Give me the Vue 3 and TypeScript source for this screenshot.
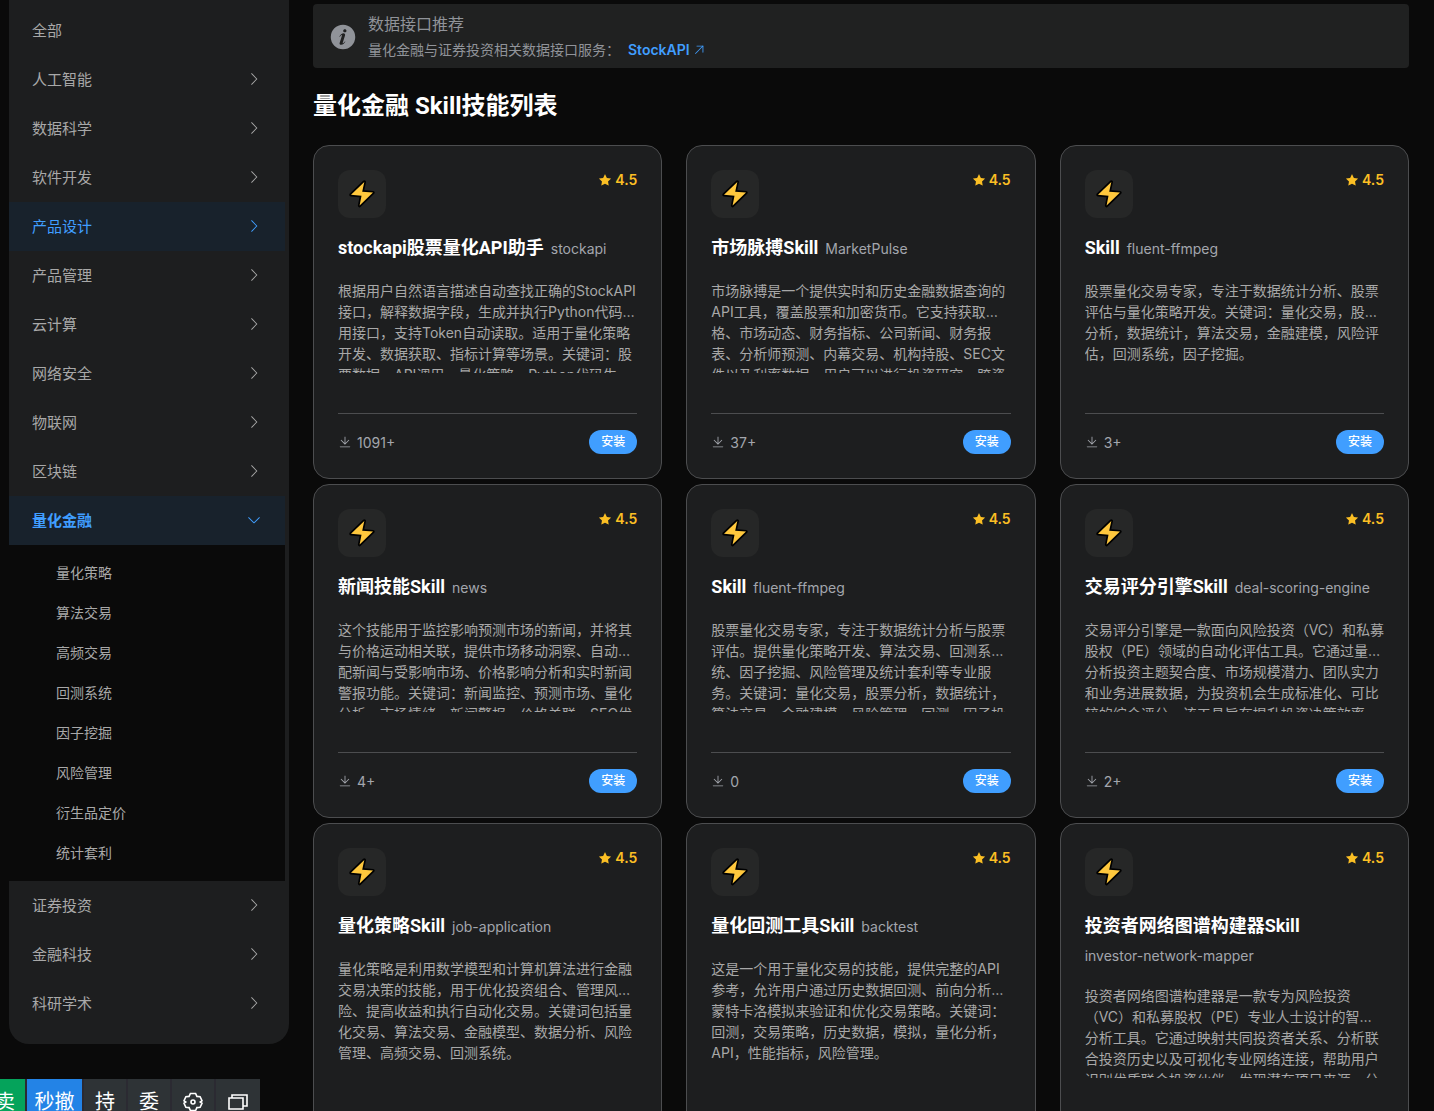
<script setup lang="ts">
interface Category {
  name: string
  state?: 'hover' | 'open'
  leaf?: boolean
  children?: string[]
}

interface Skill {
  title: string
  slug: string
  lines: string[]
  installs: string
}

const categories: Category[] = [
  { name: '全部', leaf: true },
  { name: '人工智能' },
  { name: '数据科学' },
  { name: '软件开发' },
  { name: '产品设计', state: 'hover' },
  { name: '产品管理' },
  { name: '云计算' },
  { name: '网络安全' },
  { name: '物联网' },
  { name: '区块链' },
  {
    name: '量化金融',
    state: 'open',
    children: ['量化策略', '算法交易', '高频交易', '回测系统', '因子挖掘', '风险管理', '衍生品定价', '统计套利'],
  },
  { name: '证券投资' },
  { name: '金融科技' },
  { name: '科研学术' },
]

const skills: Skill[] = [
  {
    title: 'stockapi股票量化API助手',
    slug: 'stockapi',
    lines: [
      '根据用户自然语言描述自动查找正确的StockAPI',
      '接口，解释数据字段，生成并执行Python代码…',
      '用接口，支持Token自动读取。适用于量化策略',
      '开发、数据获取、指标计算等场景。关键词：股',
      '票数据、API调用、量化策略、Python代码生',
    ],
    installs: '1091+',
  },
  {
    title: '市场脉搏Skill',
    slug: 'MarketPulse',
    lines: [
      '市场脉搏是一个提供实时和历史金融数据查询的',
      'API工具，覆盖股票和加密货币。它支持获取…',
      '格、市场动态、财务指标、公司新闻、财务报',
      '表、分析师预测、内幕交易、机构持股、SEC文',
      '件以及利率数据。用户可以进行投资研究、跨资',
    ],
    installs: '37+',
  },
  {
    title: 'Skill',
    slug: 'fluent-ffmpeg',
    lines: [
      '股票量化交易专家，专注于数据统计分析、股票',
      '评估与量化策略开发。关键词：量化交易，股…',
      '分析，数据统计，算法交易，金融建模，风险评',
      '估，回测系统，因子挖掘。',
    ],
    installs: '3+',
  },
  {
    title: '新闻技能Skill',
    slug: 'news',
    lines: [
      '这个技能用于监控影响预测市场的新闻，并将其',
      '与价格运动相关联，提供市场移动洞察、自动…',
      '配新闻与受影响市场、价格影响分析和实时新闻',
      '警报功能。关键词：新闻监控、预测市场、量化',
      '分析、市场情绪、新闻警报、价格关联、SEO优',
    ],
    installs: '4+',
  },
  {
    title: 'Skill',
    slug: 'fluent-ffmpeg',
    lines: [
      '股票量化交易专家，专注于数据统计分析与股票',
      '评估。提供量化策略开发、算法交易、回测系…',
      '统、因子挖掘、风险管理及统计套利等专业服',
      '务。关键词：量化交易，股票分析，数据统计，',
      '算法交易，金融建模，风险管理，回测，因子投',
    ],
    installs: '0',
  },
  {
    title: '交易评分引擎Skill',
    slug: 'deal-scoring-engine',
    lines: [
      '交易评分引擎是一款面向风险投资（VC）和私募',
      '股权（PE）领域的自动化评估工具。它通过量…',
      '分析投资主题契合度、市场规模潜力、团队实力',
      '和业务进展数据，为投资机会生成标准化、可比',
      '较的综合评分。该工具旨在提升投资决策效率',
    ],
    installs: '2+',
  },
  {
    title: '量化策略Skill',
    slug: 'job-application',
    lines: [
      '量化策略是利用数学模型和计算机算法进行金融',
      '交易决策的技能，用于优化投资组合、管理风…',
      '险、提高收益和执行自动化交易。关键词包括量',
      '化交易、算法交易、金融模型、数据分析、风险',
      '管理、高频交易、回测系统。',
    ],
    installs: '1+',
  },
  {
    title: '量化回测工具Skill',
    slug: 'backtest',
    lines: [
      '这是一个用于量化交易的技能，提供完整的API',
      '参考，允许用户通过历史数据回测、前向分析…',
      '蒙特卡洛模拟来验证和优化交易策略。关键词：',
      '回测，交易策略，历史数据，模拟，量化分析，',
      'API，性能指标，风险管理。',
    ],
    installs: '1+',
  },
  {
    title: '投资者网络图谱构建器Skill',
    slug: 'investor-network-mapper',
    lines: [
      '投资者网络图谱构建器是一款专为风险投资',
      '（VC）和私募股权（PE）专业人士设计的智…',
      '分析工具。它通过映射共同投资者关系、分析联',
      '合投资历史以及可视化专业网络连接，帮助用户',
      '识别优质联合投资伙伴、发现潜在项目来源、分',
    ],
    installs: '1+',
  },
]
</script>

<template>
  <div class="page" lang="zh-CN">
    <nav class="sidebar" aria-label="技能分类">
      <ul class="menu">
        <li v-for="c in categories" :key="c.name">
          <a href="#" class="menu-item" :class="c.state">
            <span>{{ c.name }}</span>
            <svg v-if="c.state === 'open'" class="chevron" viewBox="0 0 1024 1024" aria-hidden="true">
              <path d="M831.872 340.864 512 652.672 192.128 340.864a30.592 30.592 0 0 0-42.752 0 29.12 29.12 0 0 0 0 41.6L489.664 714.24a32 32 0 0 0 44.672 0l340.288-331.712a29.12 29.12 0 0 0 0-41.728 30.592 30.592 0 0 0-42.752 0z" />
            </svg>
            <svg v-else-if="!c.leaf" class="chevron" viewBox="0 0 1024 1024" aria-hidden="true">
              <path d="M340.864 149.312a30.592 30.592 0 0 0 0 42.752L652.736 512 340.864 831.872a30.592 30.592 0 0 0 0 42.752 29.12 29.12 0 0 0 41.728 0L714.24 534.336a32 32 0 0 0 0-44.672L382.592 149.376a29.12 29.12 0 0 0-41.728 0z" />
            </svg>
          </a>
          <ul v-if="c.children" class="submenu">
            <li v-for="s in c.children" :key="s">
              <a href="#" class="submenu-item">{{ s }}</a>
            </li>
          </ul>
        </li>
      </ul>
    </nav>

    <main class="content">
      <section class="notice">
        <svg class="notice-icon" viewBox="0 0 1024 1024" aria-hidden="true">
          <path d="M512 64a448 448 0 1 1 0 896.064A448 448 0 0 1 512 64m67.2 275.072c33.28 0 60.288-23.104 60.288-57.344s-27.072-57.344-60.288-57.344c-33.28 0-60.16 23.104-60.16 57.344s26.88 57.344 60.16 57.344M590.912 699.2c0-6.848 2.368-24.64 1.024-34.752l-52.608 60.544c-10.88 11.456-24.512 19.392-30.912 17.28a12.992 12.992 0 0 1-8.256-14.72l87.68-276.992c7.168-35.136-12.544-67.2-54.336-71.296-44.096 0-108.992 44.736-148.48 101.504 0 6.784-1.28 23.68.064 33.792l52.544-60.608c10.88-11.328 23.552-19.328 29.952-17.152a12.8 12.8 0 0 1 7.808 16.128L388.48 728.576c-10.048 32.256 8.96 63.872 55.04 71.04 67.84 0 107.904-43.648 147.456-100.416z" />
        </svg>
        <div class="notice-body">
          <p class="notice-title">数据接口推荐</p>
          <p class="notice-text">
            <span>量化金融与证券投资相关数据接口服务：</span>
            <a href="#" class="notice-link">
              StockAPI
              <svg viewBox="0 0 1024 1024" aria-hidden="true">
                <path d="M768 256H353.6a32 32 0 1 1 0-64H800a32 32 0 0 1 32 32v448a32 32 0 0 1-64 0z" />
                <path d="M777.344 201.344a32 32 0 0 1 45.312 45.312l-544 544a32 32 0 0 1-45.312-45.312z" />
              </svg>
            </a>
          </p>
        </div>
      </section>

      <h1 class="heading">量化金融 Skill技能列表</h1>

      <div class="grid">
        <article v-for="(s, i) in skills" :key="i" class="card">
          <header class="card-head">
            <span class="badge">
              <svg viewBox="0 0 26 28" aria-hidden="true">
                <path class="bolt-edge" d="M15.3 2 13.2 11.7 24 12.6 10.6 25.6 12.5 15.8 2 14.8Z" />
                <path class="bolt-fill" d="M15.3 2 13.2 11.7 24 12.6 10.6 25.6 12.5 15.8 2 14.8Z" />
              </svg>
            </span>
            <span class="rating">
              <svg viewBox="0 0 1024 1024" aria-hidden="true">
                <path d="M283.84 867.84 512 747.776l228.16 119.936a6.4 6.4 0 0 0 9.28-6.72l-43.52-254.08 184.512-179.904a6.4 6.4 0 0 0-3.52-10.88l-255.104-37.12L517.76 147.904a6.4 6.4 0 0 0-11.52 0L392.192 379.072l-255.104 37.12a6.4 6.4 0 0 0-3.52 10.88L318.08 606.976l-43.584 254.08a6.4 6.4 0 0 0 9.28 6.72z" />
              </svg>
              4.5
            </span>
          </header>
          <div class="card-title">
            <h2>{{ s.title }}</h2>
            <span class="slug">{{ s.slug }}</span>
          </div>
          <p class="desc">
            <span v-for="line in s.lines" :key="line" class="line">{{ line }}</span>
          </p>
          <footer class="card-foot">
            <span class="installs">
              <svg viewBox="0 0 1024 1024" aria-hidden="true">
                <path d="M160 832h704a32 32 0 1 1 0 64H160a32 32 0 1 1 0-64m384-253.696 236.288-236.352 45.248 45.248L508.8 704 192 387.2l45.248-45.248L480 584.704V128h64z" />
              </svg>
              {{ s.installs }}
            </span>
            <button type="button" class="install">安装</button>
          </footer>
        </article>
      </div>
    </main>

    <div class="dock" role="toolbar" aria-label="交易工具">
      <button type="button" class="dock-btn sell">卖</button>
      <button type="button" class="dock-btn cancel">秒撤</button>
      <button type="button" class="dock-btn">持</button>
      <button type="button" class="dock-btn">委</button>
      <button type="button" class="dock-btn" aria-label="设置">
        <svg viewBox="0 0 20 20" aria-hidden="true">
          <path d="M7.4 1.500h5.200l1.300 2.900 3.200.3 1.900 4-1.700 1.300 1.700 1.300-1.900 4-3.200.3-1.300 2.900H7.400l-1.300-2.900-3.200-.3-1.900-4L2.700 10 1 8.700l1.900-4 3.200-.3Z" />
          <circle cx="10" cy="10" r="2" />
        </svg>
      </button>
      <button type="button" class="dock-btn last" aria-label="窗口">
        <svg viewBox="0 0 20 20" aria-hidden="true">
          <path d="M1 6h14v11H1ZM4 6V3h15v11h-4" />
        </svg>
      </button>
    </div>
  </div>
</template>

<style>
body {
  background: #0a0a0a;
}
</style>

<style scoped>
.page {
  display: flex;
  align-items: flex-start;
  gap: 24px;
  height: 100vh;
  padding: 0 25px 0 9px;
  box-sizing: border-box;
  overflow: hidden;
  background: #0a0a0a;
  color: #a8a8a8;
  font-family: Inter, "Noto Sans CJK SC", sans-serif;
  font-size: 14px;
}

ul,
p,
h1,
h2 {
  margin: 0;
  padding: 0;
  list-style: none;
}

a {
  color: inherit;
  text-decoration: none;
}

svg {
  display: block;
  flex: none;
  fill: currentColor;
}

button {
  border: 0;
  font-family: inherit;
  cursor: pointer;
}

/* Sidebar */
.sidebar {
  flex: 0 0 280px;
  box-sizing: border-box;
  padding: 6px 4px 16px 0;
  border-radius: 0 0 20px 20px;
  background: #1d1e1f;
}

.menu-item {
  display: flex;
  align-items: center;
  justify-content: space-between;
  height: 49px;
  padding: 0 23px 2px;
  box-sizing: border-box;
  font-size: 15px;
}

.menu-item.hover,
.menu-item.open {
  background: #18222c;
  color: #409eff;
}

.menu-item.open {
  font-weight: 700;
}

.chevron {
  width: 16px;
  height: 16px;
}

.submenu {
  padding: 8px 0;
  background: #0a0a0a;
}

.submenu-item {
  display: flex;
  align-items: center;
  height: 40px;
  padding: 0 0 2px 47px;
  box-sizing: border-box;
}

/* Notice */
.content {
  flex: 1;
  min-width: 0;
  padding-top: 4px;
}

.notice {
  display: flex;
  align-items: center;
  gap: 11px;
  padding: 8px 16px 6px;
  border-radius: 4px;
  background: #202121;
  color: #909399;
}

.notice-icon {
  width: 28px;
  height: 28px;
}

.notice-body {
  display: flex;
  flex-direction: column;
  gap: 2px;
  line-height: 24px;
}

.notice-title {
  font-size: 16px;
}

.notice-text {
  display: flex;
  gap: 8px;
}

.notice-link {
  display: flex;
  align-items: center;
  gap: 2px;
  color: #409eff;
  font-weight: 600;
}

.notice-link svg {
  width: 14px;
  height: 14px;
}

.heading {
  margin: 20px 0 21px;
  color: #fff;
  font-family: Roboto, "Noto Sans CJK SC", sans-serif;
  font-size: 24px;
  font-weight: 700;
  line-height: 36px;
}

/* Cards */
.grid {
  display: grid;
  grid-template-columns: repeat(3, minmax(0, 1fr));
  gap: 5px 24px;
}

.card {
  display: flex;
  flex-direction: column;
  padding: 24px;
  border: 1px solid #4c4d4f;
  border-radius: 16px;
  background: #1d1e1f;
}

.card-head {
  display: flex;
  align-items: flex-start;
  justify-content: space-between;
}

.badge {
  display: flex;
  align-items: center;
  justify-content: center;
  width: 48px;
  height: 48px;
  border-radius: 12px;
  background: #262727;
}

.badge svg {
  width: 26px;
  height: 28px;
}

.bolt-edge {
  fill: #000;
  stroke: #000;
  stroke-width: 3.4;
  stroke-linejoin: round;
}

.bolt-fill {
  fill: #ffc83d;
}

.rating {
  display: flex;
  align-items: center;
  gap: 2px;
  color: #fbbf24;
  font-weight: 600;
  line-height: 20px;
}

.rating svg {
  width: 16px;
  height: 16px;
}

.card-title {
  display: flex;
  flex-wrap: wrap;
  align-items: baseline;
  gap: 7px;
  margin: 16px 0 19px;
}

.card-title h2 {
  color: #fff;
  font-family: Roboto, "Noto Sans CJK SC", sans-serif;
  font-size: 18px;
  font-weight: 700;
  line-height: 27px;
}

.slug {
  color: #a3a6ad;
  line-height: 20px;
}

.desc {
  flex: 1 0 93px;
  margin-bottom: 40px;
  height: 93px;
  overflow: hidden;
  line-height: 21px;
}

.line {
  display: block;
  white-space: nowrap;
}

.card-foot {
  display: flex;
  align-items: center;
  justify-content: space-between;
  padding-top: 16px;
  border-top: 1px solid #4c4d4f;
}

.installs {
  display: flex;
  align-items: center;
  gap: 5px;
  color: #a3a6ad;
}

.installs svg {
  width: 14px;
  height: 14px;
}

.install {
  width: 48px;
  height: 24px;
  padding: 0;
  border-radius: 12px;
  background: #409eff;
  color: #fff;
  font-size: 12px;
  font-weight: 500;
  line-height: 24px;
}

/* Docked toolbar, cut off by the window's bottom edge */
.dock {
  position: fixed;
  left: 0;
  bottom: 0;
  display: flex;
  gap: 2px;
  height: 32px;
  overflow: hidden;
  background: #2b2a32;
}

.dock-btn {
  display: flex;
  align-items: center;
  justify-content: center;
  width: 42px;
  height: 46px;
  padding: 0;
  background: #2e3336;
  color: #fff;
  font-size: 20px;
  line-height: 46px;
}

.dock-btn.sell {
  justify-content: flex-end;
  width: 25px;
  padding-right: 10px;
  background: #05a35b;
}

.dock-btn.cancel {
  width: 55px;
  background: #2383e6;
}

.dock-btn.last {
  width: 44px;
}

.dock-btn svg {
  width: 20px;
  height: 20px;
  fill: none;
  stroke: #fff;
  stroke-width: 1.6;
}
</style>
